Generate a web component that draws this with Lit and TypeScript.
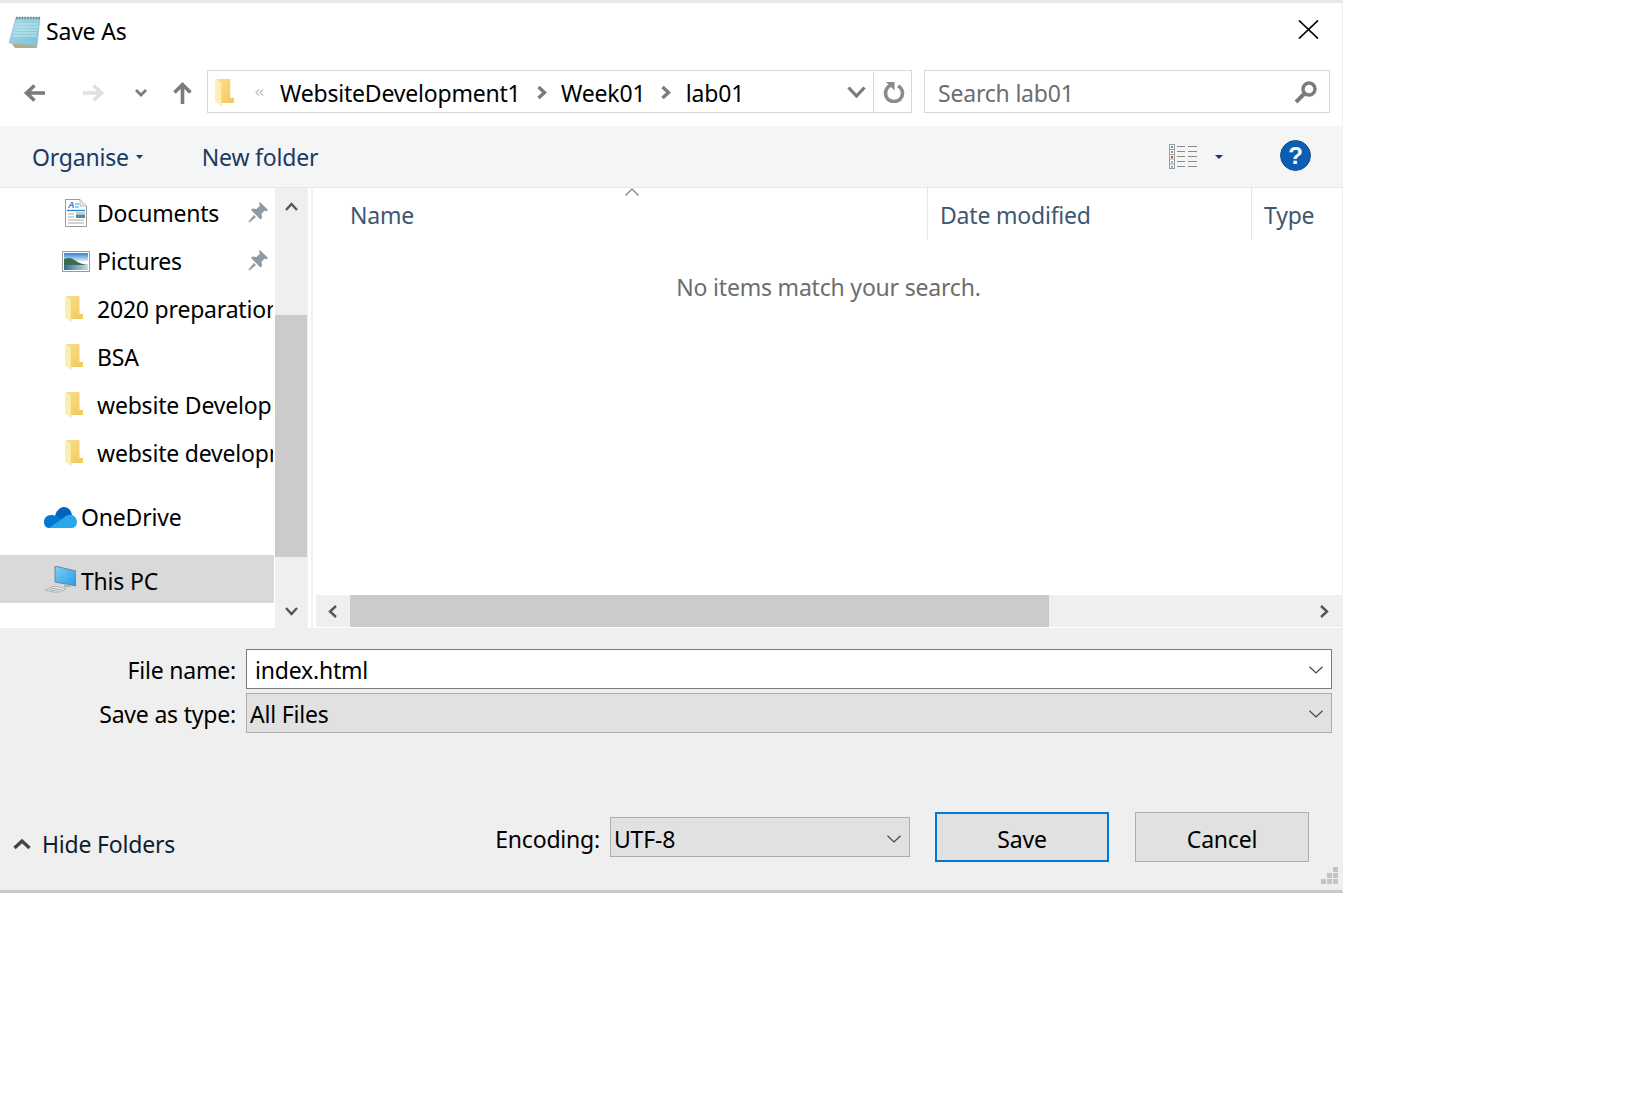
import { html, css, LitElement, TemplateResult } from 'lit';
import { customElement } from 'lit/decorators.js';

const folderIcon = (w: number, h: number): TemplateResult => html`
  <svg width=${w} height=${h} viewBox="0 0 18 26">
    <defs>
      <linearGradient id="fg" x1="0" y1="0" x2="1" y2="1">
        <stop offset="0" stop-color="#fbe08e" />
        <stop offset="1" stop-color="#f1c75f" />
      </linearGradient>
    </defs>
    <path d="M1 0H14.500V18H18V23H6V6Z" fill="url(#fg)" />
    <path d="M0 0L6 4V26L0 22Z" fill="#fdeeb4" />
    <path d="M6 4V26" stroke="#f0d48a" stroke-width="0.6" />
  </svg>
`;

const pinIcon = html`
  <svg class="pin" width="20" height="21" viewBox="0 0 20 21">
    <g fill="#8f9aa2">
      <path d="M12 0L20 8L18 9.5L16.5 8.5L13.5 12L14 16L12.5 17.5L3 8L4.5 6.5L8.5 7L12 3.5L11 2Z" />
      <path d="M6 13L0.5 19.5L1.5 20.5L8 15Z" />
    </g>
  </svg>
`;

const docIcon = html`
  <svg width="22" height="28" viewBox="0 0 22 28">
    <path d="M0.5 0.5H15L21.5 7V27.5H0.5Z" fill="#fff" stroke="#9a9a9a" />
    <path d="M15 0.5V7H21.5" fill="#e8e8e8" stroke="#bdbdbd" />
    <text x="3" y="9" font-size="9" font-weight="700" font-style="italic" fill="#2a7fd4" font-family="Liberation Sans">A</text>
    <path d="M10 5H14M10 8H14" stroke="#3f94dc" />
    <path d="M2 11.5H20" stroke="#2a8ad8" stroke-width="1.4" />
    <rect x="11" y="13.5" width="9" height="5.5" fill="#5f8a80" />
    <rect x="11" y="13.5" width="9" height="2.2" fill="#b6d6e8" />
    <path d="M3 15H9M3 18H9M3 21H19M3 24H19" stroke="#a8a8a8" />
  </svg>
`;

const picturesIcon = html`
  <svg width="28" height="21" viewBox="0 0 28 21">
    <defs>
      <linearGradient id="sky" x1="0" y1="0" x2="0" y2="1">
        <stop offset="0" stop-color="#2f86d6" />
        <stop offset="1" stop-color="#d4eaf5" />
      </linearGradient>
      <linearGradient id="water" x1="0" y1="0" x2="1" y2="0">
        <stop offset="0" stop-color="#2d6d9e" />
        <stop offset="1" stop-color="#c8dce4" />
      </linearGradient>
    </defs>
    <rect x="0.5" y="0.5" width="27" height="20" fill="#fff" stroke="#9a9a9a" />
    <rect x="2" y="2" width="24" height="8" fill="url(#sky)" />
    <rect x="2" y="13" width="24" height="6" fill="url(#water)" />
    <path d="M2 8C7 6 10 7 14 10C17 12 21 13 24 14H2Z" fill="#3f6a50" />
  </svg>
`;

const cloudIcon = html`
  <svg width="33" height="21" viewBox="0 0 33 21">
    <path d="M11 9C12 4 16 0 20 0C24 0 27 3 28 8L20 14Z" fill="#0364b8" />
    <path d="M0 15C0 11 3 8 7 8C9 8 11 8.5 12.5 9.5L22 14L12 21H5C2 21 0 18 0 15Z" fill="#0078d4" />
    <path d="M5 21L20 10.5C22 8.5 25 7.5 28 8C31 9 33 12 33 15C33 18 31 21 28 21Z" fill="#28a8ea" />
  </svg>
`;

const pcIcon = html`
  <svg width="31" height="27" viewBox="0 0 31 27">
    <defs>
      <linearGradient id="scr" x1="0" y1="0" x2="1" y2="1">
        <stop offset="0" stop-color="#7ad0fb" />
        <stop offset="1" stop-color="#2b9be8" />
      </linearGradient>
    </defs>
    <path d="M10 0L31 5V20L10 16Z" fill="url(#scr)" stroke="#5f7f95" stroke-width="0.9" />
    <path d="M19 18V21H26L25 19" fill="#a8b4bc" />
    <path d="M0 24L9 20L21 22.5L13 27Z" fill="#e8eaec" stroke="#a0a0a0" stroke-width="0.7" />
    <path d="M4 23.5L14 25.5M6.5 22L17 24" stroke="#a0a0a0" stroke-width="0.9" />
  </svg>
`;

const notepadIcon = html`
  <svg class="app-icon" width="32" height="32" viewBox="0 0 32 32">
    <defs>
      <linearGradient id="pad" x1="0" y1="0" x2="1" y2="1">
        <stop offset="0" stop-color="#a8dbe8" />
        <stop offset="1" stop-color="#7ec0d6" />
      </linearGradient>
    </defs>
    <path d="M3 28L27 28L28 32H6Z" fill="#b8a988" />
    <path d="M7 1.5H31L28 30L0 27Z" fill="url(#pad)" stroke="#8fb5c2" stroke-width="0.6" />
    <path d="M7 2H31" stroke="#6d8a94" stroke-width="2.4" stroke-dasharray="1.6 1.2" />
    <path d="M6 8H29M5.5 11H29M5 14H28M4.5 17H28M4 20H28" stroke="#c6e8f0" stroke-width="1" />
  </svg>
`;

const chevron = (d: string, w: number, h: number, stroke: string, sw: number): TemplateResult => html`
  <svg width=${w} height=${h} viewBox="0 0 ${w} ${h}">
    <path d=${d} fill="none" stroke=${stroke} stroke-width=${sw} />
  </svg>
`;

const thinDown = html`<svg class="thin-down" width="14" height="8" viewBox="0 0 14 8"><path d="M0.5 0.7L7 7L13.5 0.7" fill="none" stroke="#444" stroke-width="1.2" /></svg>`;

@customElement('app-root')
export class AppRoot extends LitElement {
  static styles = css`
    :host {
      display: block;
      font-family: 'Noto Sans', 'Open Sans', sans-serif;
      font-size: 23px;
      letter-spacing: -0.2px;
      color: #000;
    }

    svg {
      display: block;
      flex: none;
    }

    .dialog {
      box-sizing: border-box;
      width: 1343px;
      height: 893px;
      display: flex;
      flex-direction: column;
      background: #fff;
      border-top: 3px solid #e8e8e8;
      border-bottom: 3px solid #c9c9c9;
      border-right: 1px solid #f0f0f0;
    }

    .title {
      height: 57px;
      flex: none;
      display: flex;
      align-items: center;
      padding: 0 23px 0 9px;
    }

    .title-text {
      margin-left: 5px;
      margin-top: -1px;
      line-height: 1;
    }

    .close {
      margin-left: auto;
      margin-top: -5px;
    }

    .nav {
      height: 66px;
      flex: none;
      box-sizing: border-box;
      padding: 10px 0 0 23px;
      display: flex;
      align-items: flex-start;
    }

    .nav-btn {
      height: 45px;
      display: flex;
      align-items: center;
    }

    .fwd {
      margin-left: 38px;
    }

    .recent {
      margin-left: 30px;
    }

    .up {
      margin-left: 26px;
    }

    .address,
    .search {
      box-sizing: border-box;
      height: 43px;
      border: 1.5px solid #d8d8d8;
      display: flex;
      align-items: center;
      padding-top: 1px;
    }

    .address {
      width: 705px;
      margin-left: 15px;
      padding-left: 7px;
    }

    .laquo {
      margin-left: 21px;
      margin-right: 16px;
    }

    .crumb {
      padding-top: 2px;
    }

    .crumb-sep {
      margin: 0 14.5px 0 16px;
    }

    .addr-end {
      margin-left: auto;
      display: flex;
      align-items: center;
      height: 100%;
    }

    .addr-refresh {
      margin-left: 7px;
      width: 38px;
      height: 100%;
      border-left: 1.5px solid #d8d8d8;
      box-sizing: border-box;
      display: flex;
      align-items: center;
      justify-content: center;
      padding-left: 2px;
    }

    .search {
      width: 406px;
      margin-left: 12px;
      padding: 1px 12px 0 13px;
      color: #6d6d6d;
      justify-content: space-between;
    }

    .toolbar {
      height: 62px;
      flex: none;
      box-sizing: border-box;
      display: flex;
      align-items: center;
      padding-left: 32px;
      background: #f4f5f7;
      border-bottom: 1.5px solid #e6e6e6;
      color: #1c3a5e;
    }

    .tool-caret {
      margin-left: 7px;
    }

    .new-folder {
      margin-left: 59px;
    }

    .view {
      margin-left: auto;
    }

    .view-caret {
      margin-left: 18px;
    }

    .help {
      margin: -2px 31px 0 57px;
    }

    .main {
      flex: 1;
      min-height: 0;
      display: flex;
    }

    .tree {
      width: 275px;
      flex: none;
      overflow: hidden;
      padding-top: 1px;
      box-sizing: border-box;
    }

    .row {
      height: 48px;
      display: flex;
      align-items: center;
      white-space: nowrap;
    }

    .row.child {
      padding: 0 2px 0 60px;
    }

    .row.child .icon {
      width: 32px;
      margin-right: 5px;
    }

    .row.root {
      padding-left: 42px;
    }

    .row.root .icon {
      width: 37px;
      margin-right: 2px;
    }

    .row.one {
      margin-top: 16px;
    }

    .row.pc {
      margin-top: 14px;
      margin-right: 1px;
      background: #d9d9d9;
    }

    .icon {
      display: flex;
      justify-content: center;
      flex: none;
    }

    .icon.folder {
      padding-right: 4px;
      box-sizing: border-box;
    }

    .name {
      flex: 1;
      min-width: 0;
      overflow: hidden;
      padding-bottom: 1px;
    }

    .row.pc .name {
      padding: 3px 0 0;
    }

    .pin {
      margin: 0 5px 2px 0;
    }

    .vscroll {
      width: 33px;
      flex: none;
      background: #efefef;
      display: flex;
      flex-direction: column;
      align-items: center;
    }

    .vs-track {
      flex: 1;
      width: 100%;
      min-height: 0;
      display: flex;
      flex-direction: column;
      align-items: center;
      padding-top: 14px;
      box-sizing: border-box;
    }

    .vs-thumb {
      width: 32px;
      height: 242px;
      align-self: flex-start;
      background: #cbcbcb;
      margin-top: 104px;
    }

    .vs-down {
      margin-top: 50px;
    }

    .gutter {
      width: 3px;
      flex: none;
      background: #fff;
      border-right: 2px solid #f2f2f2;
    }

    .files {
      flex: 1;
      min-width: 0;
      display: flex;
      flex-direction: column;
    }

    .head {
      height: 52px;
      flex: none;
      display: flex;
      color: #3f5670;
      position: relative;
    }

    .col {
      display: flex;
      align-items: center;
      box-sizing: border-box;
      padding-top: 2px;
    }

    .col.name-col {
      width: 614px;
      padding-left: 37px;
    }

    .col.date-col {
      width: 324px;
      padding-left: 12px;
      border-left: 1px solid #e6e6e6;
    }

    .col.type-col {
      flex: 1;
      padding-left: 12px;
      border-left: 1px solid #e6e6e6;
    }

    .sort {
      position: absolute;
      left: 312px;
      top: 0;
    }

    .empty {
      flex: 1;
      padding: 31px 0 0 2px;
      text-align: center;
      color: #6d6d6d;
      box-sizing: border-box;
    }

    .hscroll {
      height: 32px;
      flex: none;
      margin: 0 0 1px 3px;
      background: #efefef;
      display: flex;
      align-items: center;
    }

    .hs-left {
      width: 34px;
      display: flex;
      justify-content: center;
      flex: none;
    }

    .hs-thumb {
      width: 699px;
      height: 32px;
      align-self: flex-start;
      background: #cbcbcb;
    }

    .hs-right {
      margin-left: auto;
      margin-right: 13px;
    }

    .bottom {
      height: 262px;
      flex: none;
      box-sizing: border-box;
      background: #efefef;
      padding-top: 21px;
      position: relative;
    }

    .form-row {
      display: grid;
      grid-template-columns: 236px 1086px;
      column-gap: 10px;
      height: 40px;
      align-items: center;
    }

    .form-row + .form-row {
      margin-top: 4px;
    }

    .form-label {
      text-align: right;
      padding-top: 2px;
    }

    .field {
      box-sizing: border-box;
      height: 40px;
      display: flex;
      align-items: center;
      justify-content: space-between;
      padding: 2px 8px 0 8px;
      background: #fff;
      border: 1px solid #7a7a7a;
    }

    .field.select {
      padding-left: 3px;
      background: #e1e1e1;
      border-color: #adadad;
    }

    .actions {
      display: flex;
      align-items: center;
      height: 50px;
      margin-top: 79px;
      padding: 0 33px 0 13px;
    }

    .hide {
      display: flex;
      align-items: center;
      margin-top: 13px;
      color: #0f1d33;
    }

    .hide-text {
      margin-left: 11px;
    }

    .enc-label {
      margin-left: auto;
      margin-right: 10px;
      padding-top: 4px;
    }

    .enc {
      box-sizing: border-box;
      width: 300px;
      height: 40px;
      display: flex;
      align-items: center;
      justify-content: space-between;
      padding: 3px 8px 0 3px;
      background: #e1e1e1;
      border: 1px solid #adadad;
    }

    .btn {
      box-sizing: border-box;
      width: 174px;
      height: 50px;
      display: flex;
      align-items: center;
      justify-content: center;
      padding-top: 3px;
      background: #e1e1e1;
      border: 1px solid #adadad;
    }

    .btn.primary {
      margin-left: 25px;
      border: 2px solid #0078d7;
    }

    .btn.cancel {
      margin-left: 26px;
    }

    .grip {
      position: absolute;
      right: 4px;
      bottom: 6px;
    }
  `;

  render(): TemplateResult {
    return html`
      <div class="dialog">
        <div class="title">
          ${notepadIcon}
          <span class="title-text">Save As</span>
          <svg class="close" width="21" height="19" viewBox="0 0 21 19">
            <path d="M1 0.5L20 18.5M20 0.5L1 18.5" stroke="#000" stroke-width="1.7" />
          </svg>
        </div>

        <div class="nav">
          <div class="nav-btn">
            ${chevron('M22 9H4M11.5 1.5L3.5 9L11.5 16.5', 22, 18, '#7b7b7b', 3.6)}
          </div>
          <div class="nav-btn fwd">
            ${chevron('M0 9H18M10.5 1.5L18.5 9L10.5 16.5', 22, 18, '#e0e0e0', 3.6)}
          </div>
          <div class="nav-btn recent">
            ${chevron('M1 1L6 6L11 1', 12, 8, '#7b7b7b', 2.8)}
          </div>
          <div class="nav-btn up">
            ${chevron('M9.5 23V4M1.5 11.5L9.5 3.5L17.5 11.5', 19, 23, '#7b7b7b', 3.6)}
          </div>

          <div class="address">
            ${folderIcon(19, 27)}
            <svg class="laquo" width="9" height="7" viewBox="0 0 9 7">
              <path d="M4 0.5L1 3.5L4 6.5M8 0.5L5 3.5L8 6.5" fill="none" stroke="#8a8a8a" />
            </svg>
            <span class="crumb">WebsiteDevelopment1</span>
            <span class="crumb-sep">${chevron('M1.5 1L7.5 6.5L1.5 12', 10, 13, '#7b7b7b', 3.4)}</span>
            <span class="crumb">Week01</span>
            <span class="crumb-sep">${chevron('M1.5 1L7.5 6.5L1.5 12', 10, 13, '#7b7b7b', 3.4)}</span>
            <span class="crumb">lab01</span>
            <div class="addr-end">
              ${chevron('M1.5 1.5L9.5 10L17.5 1.5', 19, 12, '#7b7b7b', 3.2)}
              <div class="addr-refresh">
                <svg width="22" height="22" viewBox="0 0 22 22">
                  <path d="M15 5C18 6.500 19.500 9 19.500 12.500C19.500 17 15.800 20.500 11 20.500C6.200 20.500 2.500 17 2.500 12.500C2.500 9 4 6.500 7 4.500" fill="none" stroke="#8a8a8a" stroke-width="3.6" />
                  <path d="M3 1H11.500V9.500Z" fill="#8a8a8a" />
                </svg>
              </div>
            </div>
          </div>

          <div class="search">
            <span class="crumb">Search lab01</span>
            <svg width="23" height="23" viewBox="0 0 23 23">
              <circle cx="15" cy="8" r="6" fill="none" stroke="#7b7b7b" stroke-width="3.4" />
              <path d="M10.500 12.500L2 21" stroke="#7b7b7b" stroke-width="4" />
            </svg>
          </div>
        </div>

        <div class="toolbar">
          <span>Organise</span>
          <svg class="tool-caret" width="7" height="4" viewBox="0 0 7 4"><path d="M0 0H7L3.500 4Z" fill="#1c3a5e" /></svg>
          <span class="new-folder">New folder</span>
          <svg class="view" width="28" height="25" viewBox="0 0 28 25">
            <rect x="0.500" y="0.500" width="5" height="24" fill="#fff" stroke="#9a9a9a" />
            <path d="M1 5.500H5M1 10.500H5M1 15H5M1 20H5" stroke="#9a9a9a" />
            <rect x="2" y="2" width="2" height="2" fill="#5c8fa8" />
            <rect x="2" y="7" width="2" height="2" fill="#9a8f3a" />
            <rect x="2" y="12" width="2" height="2" fill="#c0392b" />
            <rect x="2" y="17" width="2" height="2" fill="#8fb5c2" />
            <rect x="2" y="22" width="2" height="1.500" fill="#5c8fa8" />
            <path d="M8 2.500H16M19 2.500H28M8 7.500H16M19 7.500H28M8 12.500H16M19 12.500H28M8 17.500H16M19 17.500H28M8 22.500H16M19 22.500H28" stroke="#8a8a8a" stroke-width="1.200" />
          </svg>
          <svg class="view-caret" width="8" height="4" viewBox="0 0 8 4"><path d="M0 0H8L4 4Z" fill="#1c3a5e" /></svg>
          <svg class="help" width="31" height="31" viewBox="0 0 31 31">
            <ellipse cx="15.500" cy="15.500" rx="15" ry="15" fill="#0a5fb4" stroke="#1a4f8a" />
            <text x="15.500" y="24" text-anchor="middle" font-size="24" fill="#fff" font-family="Liberation Sans" font-weight="700">?</text>
          </svg>
        </div>

        <div class="main">
          <div class="tree">
            <div class="row child">
              <span class="icon">${docIcon}</span><span class="name">Documents</span>${pinIcon}
            </div>
            <div class="row child">
              <span class="icon">${picturesIcon}</span><span class="name">Pictures</span>${pinIcon}
            </div>
            <div class="row child">
              <span class="icon folder">${folderIcon(18, 26)}</span><span class="name">2020 preparation</span>
            </div>
            <div class="row child">
              <span class="icon folder">${folderIcon(18, 26)}</span><span class="name">BSA</span>
            </div>
            <div class="row child">
              <span class="icon folder">${folderIcon(18, 26)}</span><span class="name">website Development</span>
            </div>
            <div class="row child">
              <span class="icon folder">${folderIcon(18, 26)}</span><span class="name">website development</span>
            </div>
            <div class="row root one">
              <span class="icon">${cloudIcon}</span><span class="name">OneDrive</span>
            </div>
            <div class="row root pc">
              <span class="icon">${pcIcon}</span><span class="name">This PC</span>
            </div>
          </div>

          <div class="vscroll">
            <div class="vs-track">
              ${chevron('M1 8L6.500 2L12 8', 13, 9, '#555', 2.4)}
              <div class="vs-thumb"></div>
              <div class="vs-down">${chevron('M1 1L6.500 7L12 1', 13, 9, '#555', 2.4)}</div>
            </div>
          </div>
          <div class="gutter"></div>

          <div class="files">
            <div class="head">
              <svg class="sort" width="14" height="8" viewBox="0 0 14 8">
                <path d="M0.500 7.500L7 1L13.500 7.500" fill="none" stroke="#777" stroke-width="1.100" />
              </svg>
              <div class="col name-col">Name</div>
              <div class="col date-col">Date modified</div>
              <div class="col type-col">Type</div>
            </div>
            <div class="empty">No items match your search.</div>
            <div class="hscroll">
              <div class="hs-left">${chevron('M8 1L2 6.500L8 12', 10, 13, '#555', 2.400)}</div>
              <div class="hs-thumb"></div>
              <div class="hs-right">${chevron('M2 1L8 6.500L2 12', 10, 13, '#555', 2.400)}</div>
            </div>
          </div>
        </div>

        <div class="bottom">
          <div class="form-row">
            <div class="form-label">File name:</div>
            <div class="field"><span>index.html</span>${thinDown}</div>
          </div>
          <div class="form-row">
            <div class="form-label">Save as type:</div>
            <div class="field select"><span>All Files</span>${thinDown}</div>
          </div>
          <div class="actions">
            <div class="hide">
              ${chevron('M1.500 10L9 3L16.500 10', 18, 12, '#444', 3.400)}
              <span class="hide-text">Hide Folders</span>
            </div>
            <span class="enc-label">Encoding:</span>
            <div class="enc"><span>UTF-8</span>${thinDown}</div>
            <div class="btn primary">Save</div>
            <div class="btn cancel">Cancel</div>
          </div>
          <svg class="grip" width="17" height="17" viewBox="0 0 17 17">
            <path d="M12 0h5v5h-5zM6 6h5v5H6zM12 6h5v5h-5zM0 12h5v5H0zM6 12h5v5H6zM12 12h5v5h-5z" fill="#c4c4c4" />
          </svg>
        </div>
      </div>
    `;
  }
}
